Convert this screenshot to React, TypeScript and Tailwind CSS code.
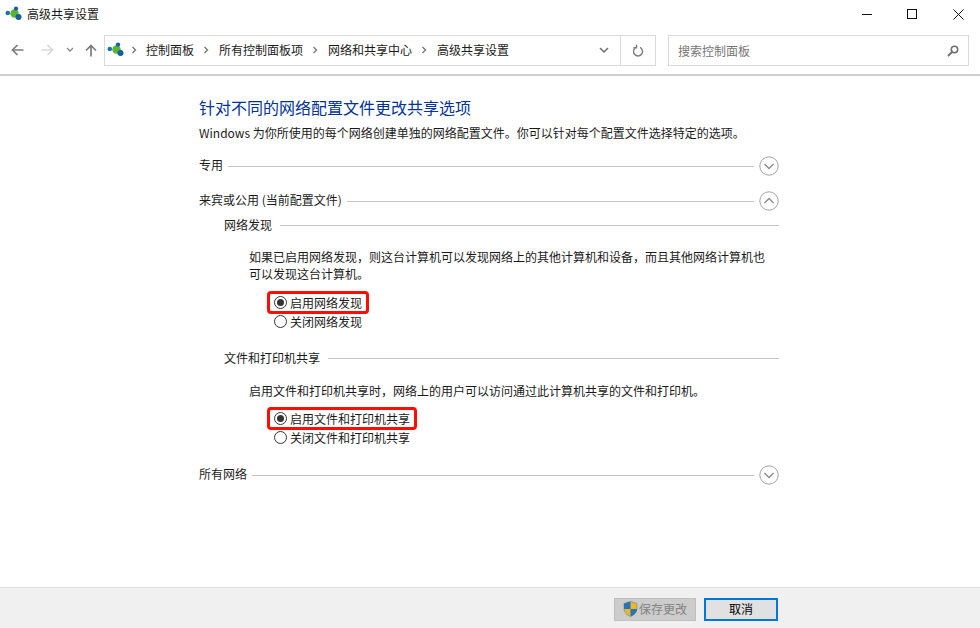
const font = "[font-family:'Noto_Sans_CJK_SC','Liberation_Sans',sans-serif]";

function NetIcon() {
  return (
    <svg width="17" height="16" viewBox="0 0 17 16" className="shrink-0">
      <circle cx="2.8" cy="7" r="2.3" fill="#1f6fb5" />
      <circle cx="9.5" cy="7.5" r="4.2" fill="#5cb531" />
      <circle cx="11" cy="2.6" r="2.2" fill="#1a5fa8" />
      <circle cx="13.5" cy="11" r="3" fill="#14609f" />
    </svg>
  );
}

function Crumb() {
  return (
    <svg width="6" height="8" viewBox="0 0 6 8" className="shrink-0">
      <path d="M1.5 1l3 3-3 3" fill="none" stroke="#7a7a7a" strokeWidth="1.4" />
    </svg>
  );
}

function Arrow({ color, flip }: { color: string; flip?: boolean }) {
  return (
    <svg width="13" height="12" viewBox="0 0 13 12" className={flip ? "rotate-180" : ""}>
      <path d="M12.5 6H1.5M6.5 1L1.5 6l5 5" fill="none" stroke={color} strokeWidth="1.7" />
    </svg>
  );
}

function Circle({ up }: { up?: boolean }) {
  return (
    <svg width="20" height="20" viewBox="0 0 20 20" className="shrink-0">
      <circle cx="10" cy="10" r="9.2" fill="#fff" stroke="#a3a3a3" strokeWidth="1" />
      <path d={up ? "M5.5 12l4.5-4.5 4.5 4.5" : "M5.5 8l4.5 4.5 4.5-4.5"} fill="none" stroke="#8a8a8a" strokeWidth="1.3" />
    </svg>
  );
}

function Radio({ checked }: { checked?: boolean }) {
  return (
    <span className="grid h-[13px] w-[13px] shrink-0 place-items-center rounded-full border border-[#333] bg-white">
      {checked && <span className="h-[7px] w-[7px] rounded-full bg-[#333]" />}
    </span>
  );
}

function Heading({ label, up, indent }: { label: string; up?: boolean; indent?: boolean }) {
  return (
    <div className={`flex h-5 items-center ${indent ? "gap-2 pl-[25px]" : "gap-[5px]"}`}>
      <span className={`text-xs whitespace-nowrap text-[#1a1a1a] ${indent ? "" : "pb-[2px]"}`}>{label}</span>
      <span className="h-px flex-1 bg-[#c4c4c4]" />
      {!indent && <Circle up={up} />}
    </div>
  );
}

function Option({ label, checked }: { label: string; checked?: boolean }) {
  return (
    <div className={`ml-[21px] flex w-fit items-center gap-[3px] pl-[4px] text-xs text-[#1a1a1a] ${checked ? "mb-[1px] h-[17px] rounded-[1px] pr-[4px] outline-[3px] outline-[#ff0d00]" : "h-[19px]"}`}>
      <Radio checked={checked} />
      <span>{label}</span>
    </div>
  );
}

export default function App() {
  return (
    <div className={`flex h-[628px] w-[980px] flex-col overflow-hidden bg-white ${font}`}>
      {/* title bar */}
      <div className="flex h-[28px] items-center pl-[5px]">
        <NetIcon />
        <span className="ml-[5px] text-xs text-[#1a1a1a]">高级共享设置</span>
        <div className="ml-auto flex h-full items-center">
          <span className="flex h-full w-[42px] items-center justify-center">
            <span className="h-px w-[10px] bg-[#111]" />
          </span>
          <span className="flex h-full w-[48px] items-center justify-center">
            <span className="h-[10px] w-[10px] border border-[#111]" />
          </span>
          <span className="flex h-full w-[44px] items-center justify-center">
            <svg width="11" height="11" viewBox="0 0 11 11">
              <path d="M.5.5l10 10M10.5.5l-10 10" stroke="#111" strokeWidth="1" />
            </svg>
          </span>
        </div>
      </div>

      {/* toolbar */}
      <div className="flex h-[48px] items-start border-b-2 border-[#d0d0d0] pt-[7px]">
        <div className="flex h-[30px] w-[104px] items-center pl-[11px]">
          <Arrow color="#7c7c7c" />
          <span className="ml-[17px]"><Arrow color="#d9d9d9" flip /></span>
          <svg width="8" height="6" viewBox="0 0 8 6" className="ml-[12px]">
            <path d="M1 1l3 3 3-3" fill="none" stroke="#8a8a8a" strokeWidth="1.3" />
          </svg>
          <svg width="12" height="13" viewBox="0 0 12 13" className="ml-[11px]">
            <path d="M6 12.5V1.5M1 6.5l5-5 5 5" fill="none" stroke="#7c7c7c" strokeWidth="1.7" />
          </svg>
        </div>
        <div className="flex h-[31px] w-[552px] items-center border border-[#d9d9d9] pl-[2px] text-xs text-[#1a1a1a]">
          <div className="flex items-center pb-[2px]">
            <NetIcon />
            <span className="ml-[7px]"><Crumb /></span>
            <span className="ml-[9px]">控制面板</span>
            <span className="ml-[9px]"><Crumb /></span>
            <span className="ml-[10px]">所有控制面板项</span>
            <span className="ml-[9px]"><Crumb /></span>
            <span className="ml-[10px]">网络和共享中心</span>
            <span className="ml-[9px]"><Crumb /></span>
            <span className="ml-[10px]">高级共享设置</span>
          </div>
          <span className="ml-auto flex h-full w-[35px] items-center justify-center border-r border-[#d9d9d9] pl-[2px]">
            <svg width="10" height="7" viewBox="0 0 10 7">
              <path d="M1 1l4 4 4-4" fill="none" stroke="#6e6e6e" strokeWidth="1.5" />
            </svg>
          </span>
          <span className="flex h-full w-[34px] items-center justify-center">
            <svg width="11" height="13" viewBox="0 0 11 13">
              <path d="M3 3.4a4.5 4.5 0 1 0 4 0M3.5 .8v3h-3" fill="none" stroke="#7c7c7c" strokeWidth="1.4" />
            </svg>
          </span>
        </div>
        <div className="ml-[12px] flex h-[31px] w-[301px] items-center justify-between border border-[#d9d9d9] pr-[9px] pl-[9px] text-xs text-[#767676]">
          <span>搜索控制面板</span>
          <svg width="12" height="12" viewBox="0 0 12 12">
            <circle cx="7.5" cy="4.5" r="3.2" fill="none" stroke="#6e6e6e" strokeWidth="1.5" />
            <path d="M5 7L1 11" stroke="#6e6e6e" strokeWidth="1.8" />
          </svg>
        </div>
      </div>

      {/* content */}
      <div className="flex-1 pl-[199px]">
        <div className="w-[580px]">
          <h1 className="mt-[20px] h-[22px] text-base leading-[22px] font-normal whitespace-nowrap text-[#003399]">针对不同的网络配置文件更改共享选项</h1>
          <p className="mt-[6px] h-[18px] text-xs leading-[18px] whitespace-nowrap text-[#1a1a1a]">Windows 为你所使用的每个网络创建单独的网络配置文件。你可以针对每个配置文件选择特定的选项。</p>

          <div className="mt-[14px]"><Heading label="专用" /></div>
          <div className="mt-[15px]"><Heading label="来宾或公用 (当前配置文件)" up /></div>

          <div className="mt-[4px]"><Heading label="网络发现" indent /></div>
          <div className="pl-[50px]">
            <p className="mt-[13px] w-[525px] text-xs leading-[17px] text-[#1a1a1a]">如果已启用网络发现，则这台计算机可以发现网络上的其他计算机和设备，而且其他网络计算机也可以发现这台计算机。</p>
            <div className="mt-[12px]"><Option label="启用网络发现" checked /></div>
            <Option label="关闭网络发现" />
          </div>

          <div className="mt-[17px]"><Heading label="文件和打印机共享" indent /></div>
          <div className="pl-[50px]">
            <p className="mt-[14px] text-xs leading-[17px] whitespace-nowrap text-[#1a1a1a]">启用文件和打印机共享时，网络上的用户可以访问通过此计算机共享的文件和打印机。</p>
            <div className="mt-[11px]"><Option label="启用文件和打印机共享" checked /></div>
            <Option label="关闭文件和打印机共享" />
          </div>

          <div className="mt-[18px]"><Heading label="所有网络" /></div>
        </div>
      </div>

      {/* footer */}
      <div className="flex h-[41px] items-start justify-end border-t border-[#dfdfdf] bg-[#f0f0f0] pt-[10px] pr-[202px] text-xs">
        <div className="flex h-[23px] w-[82px] items-center justify-center gap-[1px] border border-[#bfbfbf] bg-[#cccccc] pb-[2px] text-[#838383]">
          <svg width="15" height="16" viewBox="0 0 15 16" className="shrink-0">
            <path d="M7.5 .5l6.5 2v5c0 4-3 6.5-6.5 8C4 14 1 11.500 1 7.500v-5z" fill="#e9b826" stroke="#6f7f8f" strokeWidth=".6" />
            <path d="M7.500 .5V8H1V2.500zM7.500 8H14c0 3.500-3 6-6.500 7.500z" fill="#2c72b8" />
          </svg>
          <span>保存更改</span>
        </div>
        <div className="ml-[8px] flex h-[23px] w-[74px] items-center justify-center border-2 border-[#0078d7] bg-[#e1e1e1] pb-[2px] text-black">取消</div>
      </div>
    </div>
  );
}
